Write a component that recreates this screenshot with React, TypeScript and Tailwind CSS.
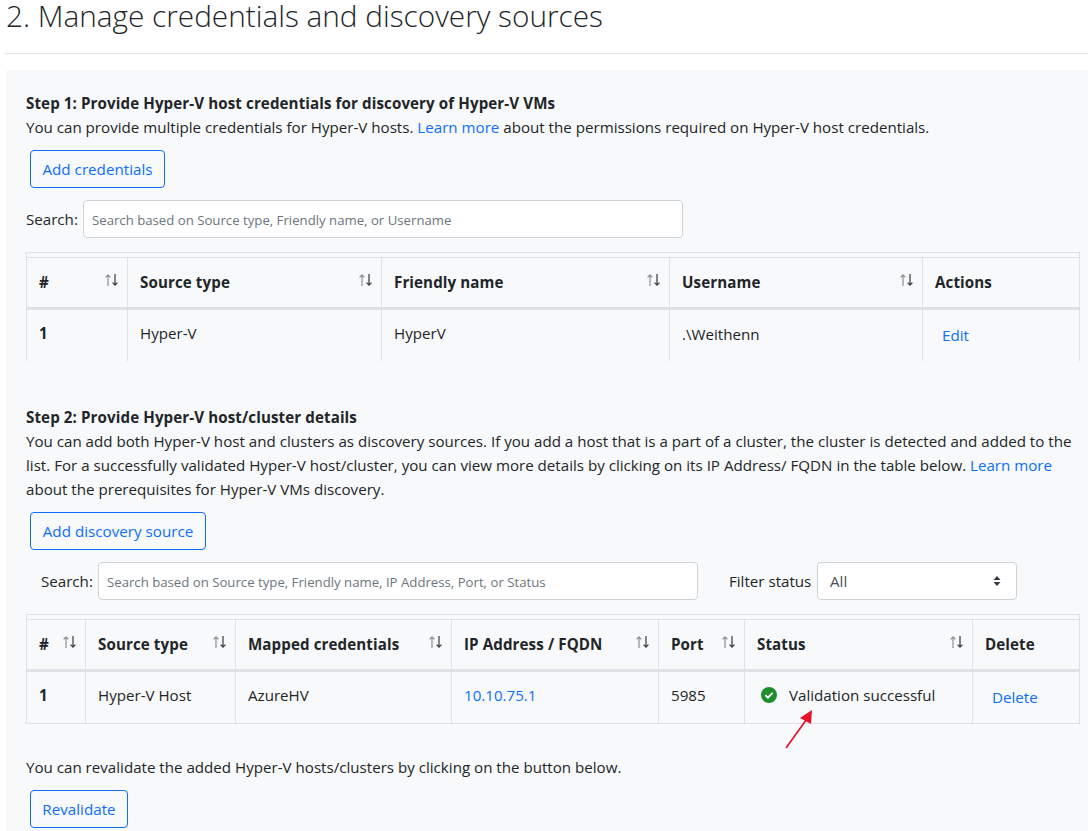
const FONT = "font-['Open_Sans','Noto_Sans',sans-serif]";

// sort arrows in table headers
function SortIcon() {
  return (
    <svg width="15" height="14" viewBox="0 0 15 14" className="shrink-0 mt-[-4px]" fill="none" strokeWidth="1.2">
      <path d="M4 13V2M1.6 4.4L4 1.8l2.4 2.6" stroke="#8a9097" />
      <path d="M11 1v11M8.6 9.6L11 12.2l2.4-2.6" stroke="#343a40" />
    </svg>
  );
}

function Th({ label, sort = true }: { label: string; sort?: boolean }) {
  return (
    <th className="border-x border-[#dee2e6] border-b-[3px] border-b-[#dee2e6] h-[51px] pl-[12px] pr-[8px] pb-[1px] text-left align-middle font-bold tracking-[0.1px] text-[#212529]">
      <div className="flex items-center justify-between">
        <span>{label}</span>
        {sort && <SortIcon />}
      </div>
    </th>
  );
}

// thin empty strip above the header row
function TopStrip({ span }: { span: number }) {
  return (
    <tr className="h-[5px] border border-[#dee2e6]">
      <th colSpan={span} className="p-0" />
    </tr>
  );
}

function OutlineButton({ label, width }: { label: string; width: string }) {
  return (
    <button className={`${width} h-[38px] ml-[4px] rounded-[4px] border border-[#0d6efd] text-[#0d6efd] text-[15.2px] text-center block`}>
      {label}
    </button>
  );
}

function SearchInput({ placeholder }: { placeholder: string }) {
  return (
    <input
      readOnly
      placeholder={placeholder}
      className="w-[600px] h-[38px] rounded-[4px] border border-[#ced4da] bg-white px-[8px] pt-[2px] text-[13.2px] placeholder:text-[#6c757d] outline-none"
    />
  );
}

export default function App() {
  return (
    <div className={`${FONT} h-[831px] w-[1088px] overflow-hidden bg-white text-[15.13px] leading-[24px] text-[#212529]`}>
      <h1 className="pl-[6px] h-[53px] text-[29.75px] leading-[32px] font-light text-[#212529]">
        2. Manage credentials and discovery sources
      </h1>
      <div className="ml-[5px] h-px bg-[#dfe2e5]" />

      <div className="ml-[6px] mt-[16px] h-[800px] bg-[#f8f9fa] pl-[20px] pr-[8px] pt-[21px]">
        {/* Step 1 */}
        <p className="font-bold tracking-[0.1px]">Step 1: Provide Hyper-V host credentials for discovery of Hyper-V VMs</p>
        <p>
          You can provide multiple credentials for Hyper-V hosts. <span className="text-[#0d6efd]">Learn more</span> about
          the permissions required on Hyper-V host credentials.
        </p>
        <div className="mt-[11px]">
          <OutlineButton label="Add credentials" width="w-[135px]" />
        </div>
        <div className="mt-[12px] flex items-center gap-[7px]">
          <span className="w-[50px]">Search:</span>
          <SearchInput placeholder="Search based on Source type, Friendly name, or Username" />
        </div>

        <table className="mt-[14px] w-[1053px] table-fixed border-collapse">
          <colgroup>
            <col className="w-[101px]" />
            <col className="w-[254px]" />
            <col className="w-[288px]" />
            <col className="w-[253px]" />
            <col className="w-[157px]" />
          </colgroup>
          <thead>
            <TopStrip span={5} />
            <tr>
              <Th label="#" />
              <Th label="Source type" />
              <Th label="Friendly name" />
              <Th label="Username" />
              <Th label="Actions" sort={false} />
            </tr>
          </thead>
          <tbody>
            <tr className="h-[52px]">
              <td className="border-x border-[#dee2e6] px-[12px] pb-[4px] font-bold">1</td>
              <td className="border-x border-[#dee2e6] px-[12px] pb-[4px]">Hyper-V</td>
              <td className="border-x border-[#dee2e6] px-[12px] pb-[4px]">HyperV</td>
              <td className="border-x border-[#dee2e6] px-[12px] pb-[2px]">.\Weithenn</td>
              <td className="border-x border-[#dee2e6] pl-[19px] pb-[1px] text-[#0d6efd]">Edit</td>
            </tr>
          </tbody>
        </table>

        {/* Step 2 */}
        <p className="mt-[44px] font-bold tracking-[0.1px]">Step 2: Provide Hyper-V host/cluster details</p>
        <p className="w-[1054px]">
          You can add both Hyper-V host and clusters as discovery sources. If you add a host that is a part of a cluster,
          the cluster is detected and added to the list. For a successfully validated Hyper-V host/cluster, you can view
          more details by clicking on its IP Address/ FQDN in the table below. <span className="text-[#0d6efd]">Learn more</span>{" "}
          about the prerequisites for Hyper-V VMs discovery.
        </p>
        <div className="mt-[11px]">
          <OutlineButton label="Add discovery source" width="w-[176px]" />
        </div>
        <div className="mt-[12px] flex items-center pl-[15px]">
          <span className="w-[57px]">Search:</span>
          <SearchInput placeholder="Search based on Source type, Friendly name, IP Address, Port, or Status" />
          <span className="ml-[31px] w-[88px]">Filter status</span>
          <div className="flex h-[38px] w-[200px] items-center justify-between rounded-[4px] border border-[#ced4da] bg-white pl-[12px] pr-[15px] text-[#495057]">
            <span>All</span>
            <svg width="8" height="12" viewBox="0 0 8 12" fill="#343a40">
              <path d="M4 1l3.5 4h-7zM4 11L.5 7h7z" />
            </svg>
          </div>
        </div>

        <table className="mt-[14px] w-[1053px] table-fixed border-collapse">
          <colgroup>
            <col className="w-[59px]" />
            <col className="w-[150px]" />
            <col className="w-[216px]" />
            <col className="w-[207px]" />
            <col className="w-[86px]" />
            <col className="w-[228px]" />
            <col className="w-[107px]" />
          </colgroup>
          <thead>
            <TopStrip span={7} />
            <tr>
              <Th label="#" />
              <Th label="Source type" />
              <Th label="Mapped credentials" />
              <Th label="IP Address / FQDN" />
              <Th label="Port" />
              <Th label="Status" />
              <Th label="Delete" sort={false} />
            </tr>
          </thead>
          <tbody>
            <tr className="h-[53px] border-b border-[#dee2e6]">
              <td className="border-x border-[#dee2e6] px-[12px] pb-[4px] font-bold">1</td>
              <td className="border-x border-[#dee2e6] px-[12px] pb-[4px]">Hyper-V Host</td>
              <td className="border-x border-[#dee2e6] px-[12px] pb-[4px]">AzureHV</td>
              <td className="border-x border-[#dee2e6] px-[12px] pb-[4px] text-[#0d6efd]">10.10.75.1</td>
              <td className="border-x border-[#dee2e6] px-[12px] pb-[4px]">5985</td>
              <td className="relative border-x border-[#dee2e6] pl-[15px] pb-[4px]">
                <div className="flex items-center gap-[11px]">
                  <svg width="18" height="18" viewBox="0 0 18 18" className="shrink-0">
                    <circle cx="9" cy="9" r="8" fill="#1e8e2e" />
                    <path d="M5.4 9.2l2.5 2.5 4.7-4.9" fill="none" stroke="#fff" strokeWidth="1.8" />
                  </svg>
                  <span>Validation successful</span>
                </div>
                {/* annotation arrow */}
                <svg width="34" height="42" viewBox="0 0 34 42" className="absolute left-[38px] top-[36px]" fill="none">
                  <path d="M3 40L26 8" stroke="#e8112d" strokeWidth="1.7" />
                  <path d="M29 2L17 10l11 6z" fill="#e8112d" />
                </svg>
              </td>
              <td className="border-x border-[#dee2e6] pl-[19px] pb-[1px] text-[#0d6efd]">Delete</td>
            </tr>
          </tbody>
        </table>

        <p className="mt-[31px]">You can revalidate the added Hyper-V hosts/clusters by clicking on the button below.</p>
        <div className="mt-[11px]">
          <OutlineButton label="Revalidate" width="w-[98px]" />
        </div>
      </div>
    </div>
  );
}
